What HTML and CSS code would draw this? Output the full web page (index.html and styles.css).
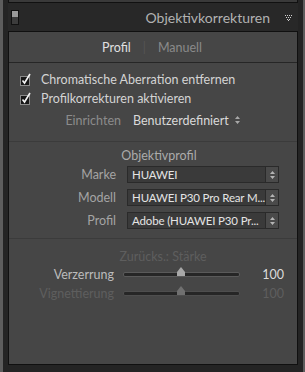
FILE: index.html
```html
<!DOCTYPE html>
<html lang="de">
<head>
    <meta charset="UTF-8">
    <title>Objektivkorrekturen</title>
    <link rel="stylesheet" href="styles.css">
</head>
<body>
    <div class="frame">
        <div class="prev-panel"></div>

        <div class="header">
            <span class="switch"><span class="switch-knob"></span></span>
            <span class="title">Objektivkorrekturen</span>
            <svg class="collapse" width="7" height="6" viewBox="0 0 7 6">
                <g fill="#cfcfcf">
                    <rect x="0" y="0" width="1" height="1"/><rect x="2" y="0" width="1" height="1"/>
                    <rect x="4" y="0" width="1" height="1"/><rect x="6" y="0" width="1" height="1"/>
                    <rect x="1" y="2" width="1" height="1"/><rect x="3" y="2" width="1" height="1"/>
                    <rect x="5" y="2" width="1" height="1"/>
                    <rect x="2" y="4" width="1" height="1"/><rect x="4" y="4" width="1" height="1"/>
                    <rect x="3" y="5" width="1" height="1"/>
                </g>
            </svg>
        </div>

        <div class="panel">
            <div class="tabs">
                <span class="tab active">Profil</span>
                <span class="tab-sep">|</span>
                <span class="tab">Manuell</span>
            </div>

            <div class="section">
                <label class="check">
                    <svg class="checkbox" width="13" height="13" viewBox="0 0 13 13">
                        <rect x="0.5" y="3.5" width="9" height="9" fill="#161616" stroke="#8a8a8a"/>
                        <path d="M2.5 7.5 L4.5 10 L10 1" fill="none" stroke="#f2f2f2" stroke-width="1.6"/>
                    </svg>
                    Chromatische Aberration entfernen
                </label>
                <label class="check">
                    <svg class="checkbox" width="13" height="13" viewBox="0 0 13 13">
                        <rect x="0.5" y="3.5" width="9" height="9" fill="#161616" stroke="#8a8a8a"/>
                        <path d="M2.5 7.5 L4.5 10 L10 1" fill="none" stroke="#f2f2f2" stroke-width="1.6"/>
                    </svg>
                    Profilkorrekturen aktivieren
                </label>
                <div class="setup">
                    <span class="setup-label">Einrichten</span>
                    <span class="setup-value">Benutzerdefiniert</span>
                    <svg class="updown" width="5" height="8" viewBox="0 0 5 8">
                        <path d="M2.5 0 L5 3 L0 3 Z M0 5 L5 5 L2.5 8 Z" fill="#a8a8a8"/>
                    </svg>
                </div>
            </div>

            <div class="section profile">
                <div class="section-title">Objektivprofil</div>
                <div class="row">
                    <span class="row-label">Marke</span>
                    <div class="select">
                        <span class="select-text">HUAWEI</span>
                        <span class="stepper"><svg width="5" height="8" viewBox="0 0 5 8"><path d="M2.5 0 L5 3 L0 3 Z M0 5 L5 5 L2.5 8 Z" fill="#b4b4b4"/></svg></span>
                    </div>
                </div>
                <div class="row">
                    <span class="row-label">Modell</span>
                    <div class="select">
                        <span class="select-text">HUAWEI P30 Pro Rear M...</span>
                        <span class="stepper"><svg width="5" height="8" viewBox="0 0 5 8"><path d="M2.5 0 L5 3 L0 3 Z M0 5 L5 5 L2.5 8 Z" fill="#b4b4b4"/></svg></span>
                    </div>
                </div>
                <div class="row">
                    <span class="row-label">Profil</span>
                    <div class="select">
                        <span class="select-text">Adobe (HUAWEI P30 Pr...</span>
                        <span class="stepper"><svg width="5" height="8" viewBox="0 0 5 8"><path d="M2.5 0 L5 3 L0 3 Z M0 5 L5 5 L2.5 8 Z" fill="#b4b4b4"/></svg></span>
                    </div>
                </div>
            </div>

            <div class="section amounts">
                <div class="section-title dim">Zurücks.: Stärke</div>
                <div class="slider-row">
                    <span class="slider-label">Verzerrung</span>
                    <div class="slider"><span class="thumb"></span></div>
                    <span class="slider-value">100</span>
                </div>
                <div class="slider-row disabled">
                    <span class="slider-label">Vignettierung</span>
                    <div class="slider"><span class="thumb"></span></div>
                    <span class="slider-value">100</span>
                </div>
            </div>
        </div>
    </div>
</body>
</html>
```

FILE: styles.css
```css
html, body {
    margin: 0;
    padding: 0;
}
body {
    width: 305px;
    height: 372px;
    overflow: hidden;
    background: #232323;
    font-family: "Lato", "Liberation Sans", sans-serif;
    font-size: 12.5px;
}
.frame {
    height: 372px;
    box-sizing: border-box;
    border-left: 3px solid #5d5d5d;
    border-right: 2px solid #5d5d5d;
    padding: 0 5px;
    background: #242424;
}
.prev-panel {
    height: 2px;
    border: 1px solid #111;
    border-top: none;
    background: #3a3a3a;
}
.header {
    height: 28px;
    display: flex;
    align-items: center;
    padding: 0 6px 0 3px;
    background: #282828;
}
.switch {
    width: 6px;
    height: 13px;
    border: 1px solid #111;
    background: #3c3c3c;
    display: flex;
    flex-direction: column;
}
.switch-knob {
    height: 6px;
    background: #9a9a9a;
}
.title {
    margin-left: auto;
    color: #b2b2b2;
    font-size: 14px;
    margin-right: 15px;
}
.collapse {
    margin-top: 1px;
}
.panel {
    height: 334px;
    box-sizing: border-box;
    border: 1px solid #101010;
    background: #464646;
}
.tabs {
    height: 30px;
    display: flex;
    justify-content: center;
    align-items: center;
    gap: 12px;
    border-bottom: 1px solid #262626;
    padding-right: 2px;
}
.tab {
    color: #8a8a8a;
}
.tab.active {
    color: #e0e0e0;
}
.tab-sep {
    color: #555;
}
.section {
    border-bottom: 1px solid #3b3b3b;
}
.check {
    display: flex;
    align-items: flex-end;
    gap: 8px;
    color: #d4d4d4;
    padding-left: 11px;
    height: 19px;
}
.section > .check:first-child {
    margin-top: 5px;
}
.checkbox {
    margin-bottom: 1px;
}
.setup {
    display: flex;
    align-items: center;
    height: 26px;
    padding-bottom: 8px;
    margin-top: 1px;
}
.setup-label {
    width: 112px;
    text-align: right;
    color: #8c8c8c;
}
.setup-value {
    margin-left: 12px;
    color: #dadada;
}
.updown {
    margin-left: 6px;
}
.profile {
    padding: 6px 0 6px;
}
.section-title {
    text-align: center;
    color: #ababab;
    height: 15px;
    line-height: 15px;
    padding-left: 12px;
}
.section-title.dim {
    color: #5e5e5e;
    padding-left: 20px;
    height: 17px;
    line-height: 17px;
}
.row {
    display: flex;
    align-items: center;
    height: 23px;
}
.row-label {
    width: 107px;
    text-align: right;
    color: #a4a4a4;
}
.select {
    margin-left: 11px;
    width: 152px;
    height: 17px;
    box-sizing: border-box;
    border: 1px solid #2a2a2a;
    background: #3a3a3a;
    display: flex;
    align-items: center;
}
.select-text {
    flex: 1;
    min-width: 0;
    font-size: 11.5px;
    letter-spacing: -0.15px;
    color: #e4e4e4;
    padding-left: 4px;
    white-space: nowrap;
    overflow: hidden;
}
.stepper {
    flex: none;
    width: 12px;
    height: 100%;
    border-left: 1px solid #2a2a2a;
    background: #4a4a4a;
    display: flex;
    align-items: center;
    justify-content: center;
}
.amounts {
    border-bottom: none;
    padding-top: 9px;
}
.slider-row {
    display: flex;
    align-items: center;
    height: 19px;
}
.slider-label {
    width: 105px;
    text-align: right;
    color: #bcbcbc;
}
.slider {
    position: relative;
    margin-left: 9px;
    width: 115px;
    height: 3px;
    border-radius: 2px;
    background: #262626;
    border: 1px solid #5a5a5a;
}
.thumb {
    position: absolute;
    left: 53px;
    top: -6px;
    width: 8px;
    height: 9px;
    background: #a8a8a8;
    clip-path: polygon(50% 0, 100% 55%, 100% 100%, 0 100%, 0 55%);
}
.slider-value {
    width: 44px;
    text-align: right;
    color: #dcdcdc;
}
.disabled .slider-label,
.disabled .slider-value {
    color: #5e5e5e;
}
.disabled .thumb {
    background: #707070;
}
.disabled .slider {
    border-color: #4e4e4e;
}
```
